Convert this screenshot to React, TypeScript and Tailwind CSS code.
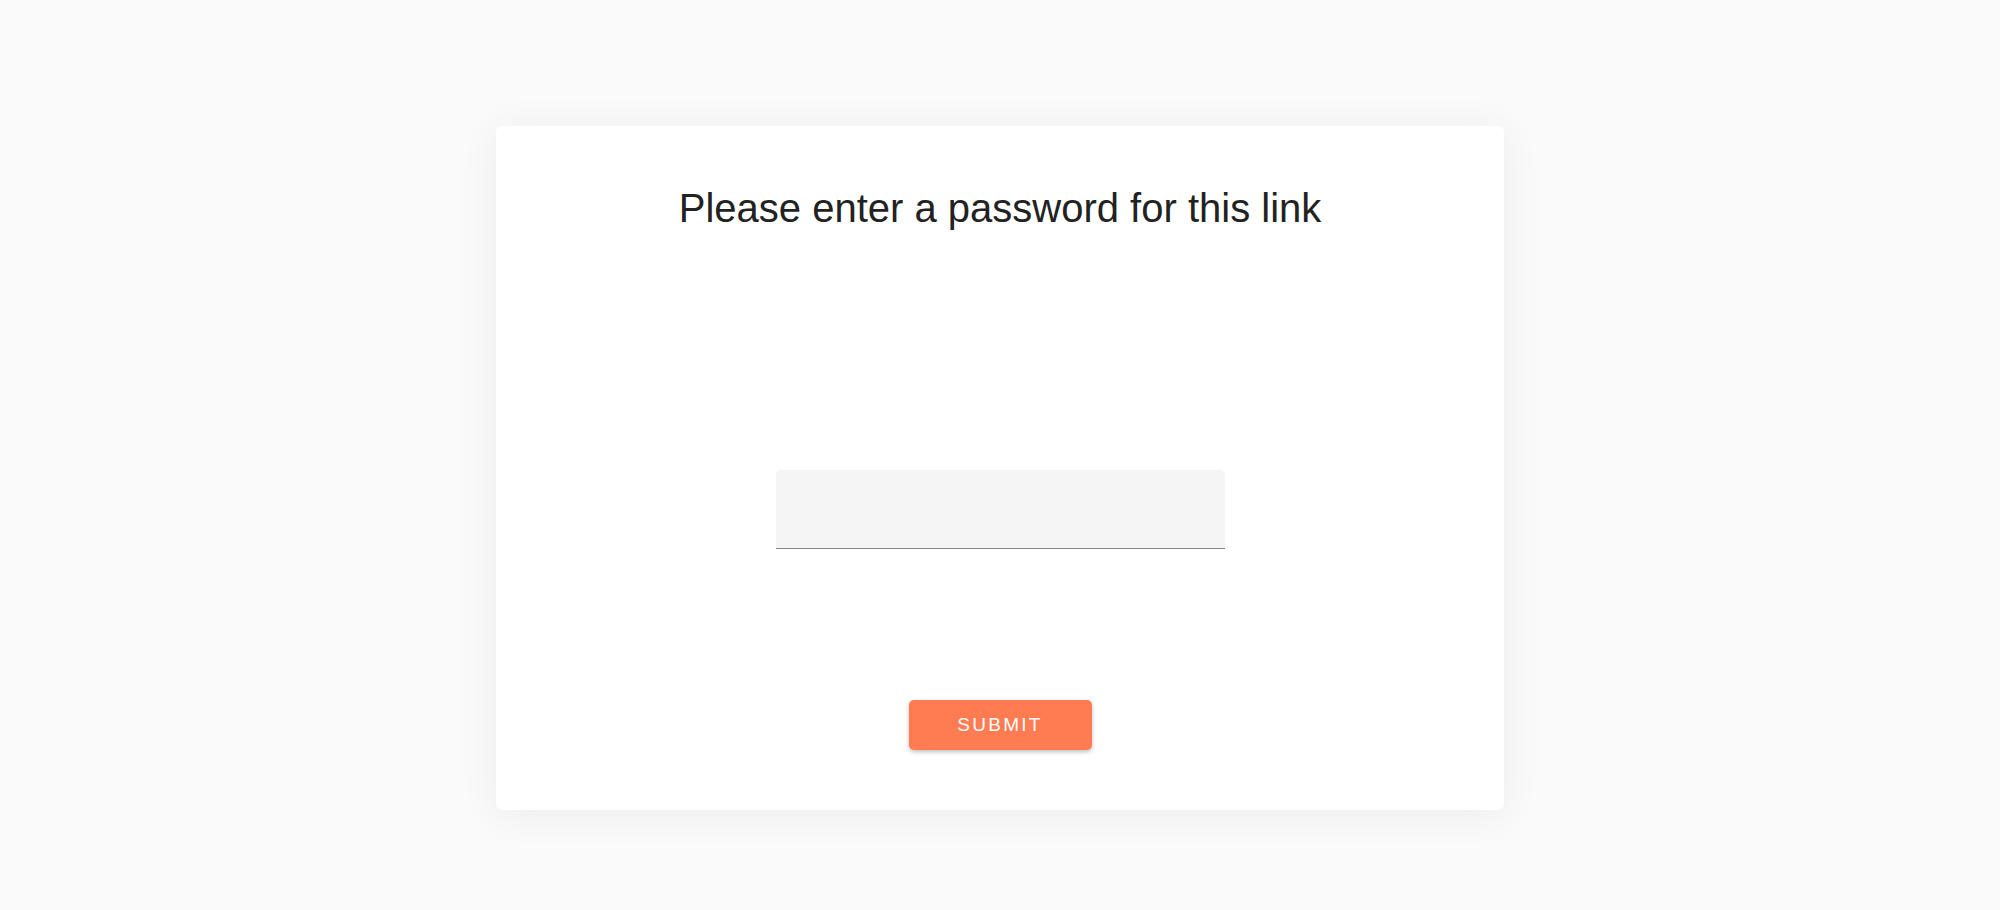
import React from 'react';

export default function App() {
  return (
    <div className="min-h-screen bg-[#fafafa] flex justify-center pt-[126px]" style={{ fontFamily: '"Liberation Sans", Arial, sans-serif' }}>
      <div className="w-[1008px] h-[684px] bg-white rounded-[6px] shadow-[0_4px_40px_rgba(0,0,0,0.06)] flex flex-col items-center">
        {/* Title */}
        <h1 className="mt-[60px] text-[40px] leading-[44px] text-[#222222]">Please enter a password for this link</h1>

        {/* Password field */}
        <div className="mt-[240px] w-[449px] h-[79px] bg-[#f5f5f5] rounded-t-[5px] border-b border-[#8a8a8a]">
          <input type="password" className="w-full h-full bg-transparent outline-none px-3 text-base" />
        </div>

        <button className="mt-[151px] w-[183px] h-[50px] rounded-[5px] bg-[#ff7b52] text-white text-[19px] tracking-[0.12em] shadow-[0_2px_4px_rgba(0,0,0,0.25)]">
          SUBMIT
        </button>
      </div>
    </div>
  );
}
